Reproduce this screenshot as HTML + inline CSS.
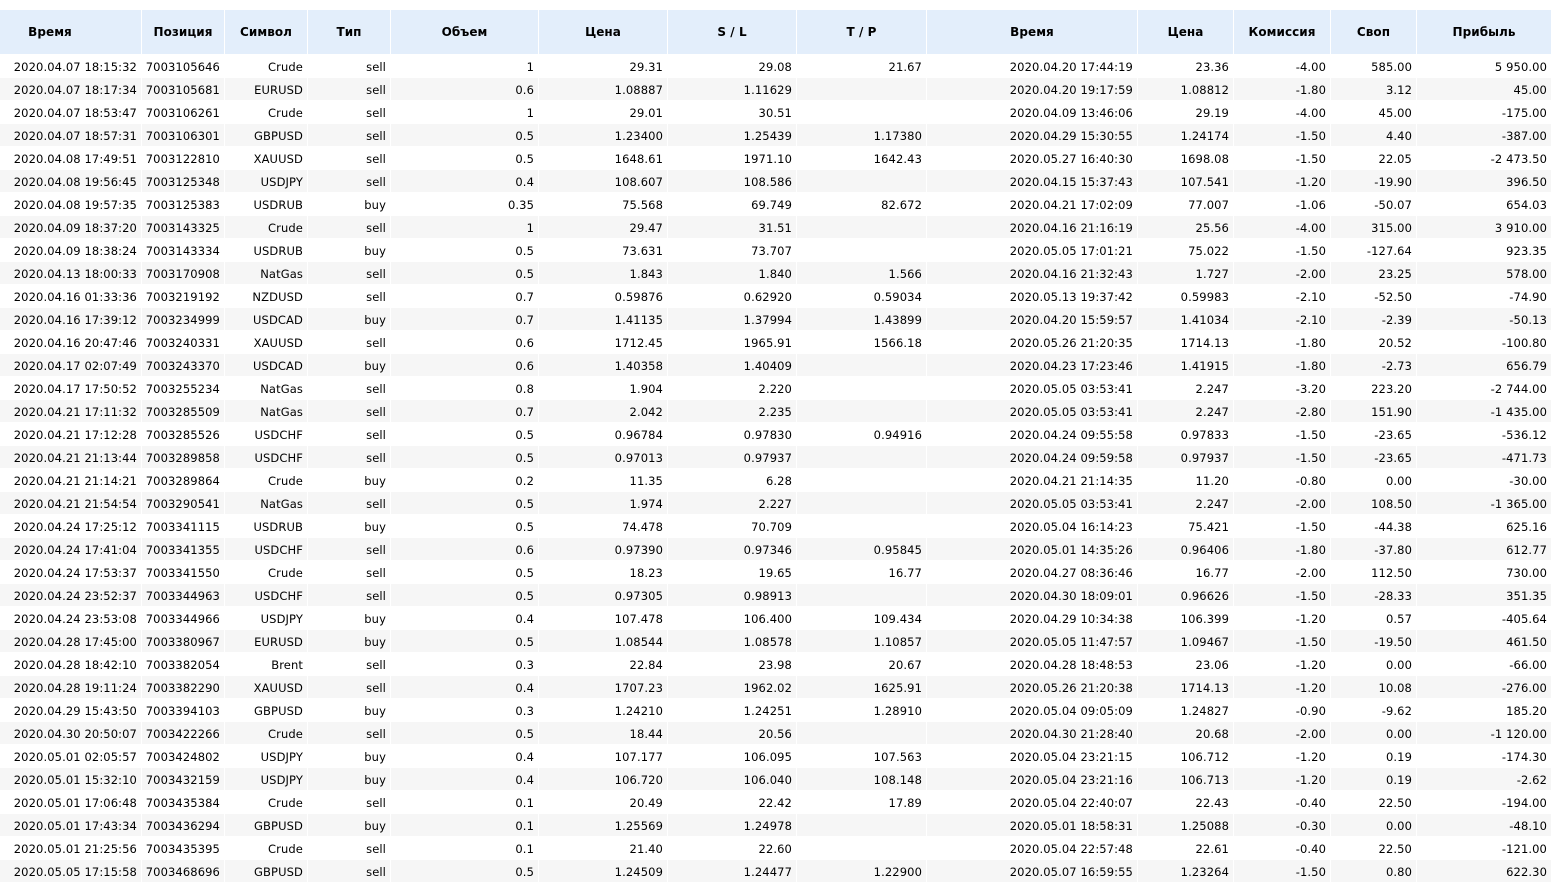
<!DOCTYPE html>
<html><head><meta charset="utf-8"><style>
html,body{margin:0;padding:0;background:#fff;width:1559px;height:882px;overflow:hidden}
table{position:absolute;left:-1px;top:9px;border-collapse:separate;border-spacing:1px;table-layout:fixed;width:1553px;font-family:"DejaVu Sans","Liberation Sans",sans-serif;font-size:11.5px;letter-spacing:.11px;color:#000}
th{height:44px;padding:0;background:#e3eefb;font-weight:bold;font-size:12px;letter-spacing:.05px;text-align:center;white-space:nowrap;color:#000}
td{box-sizing:border-box;height:22px;padding:2px 4px 0 0;text-align:right;white-space:nowrap;overflow:hidden}
tr:nth-child(odd) td{background:#f6f6f6}
th.f{padding-right:41px;width:100px}
</style></head><body>
<table>
<colgroup><col style="width:141px"><col style="width:82px"><col style="width:82px"><col style="width:82px"><col style="width:147px"><col style="width:128px"><col style="width:128px"><col style="width:129px"><col style="width:210px"><col style="width:95px"><col style="width:96px"><col style="width:85px"><col style="width:134px"></colgroup>
<tr><th class="f">Время</th><th>Позиция</th><th>Символ</th><th>Тип</th><th>Объем</th><th>Цена</th><th>S / L</th><th>T / P</th><th>Время</th><th>Цена</th><th>Комиссия</th><th>Своп</th><th>Прибыль</th></tr>
<tr><td>2020.04.07 18:15:32</td><td>7003105646</td><td>Crude</td><td>sell</td><td>1</td><td>29.31</td><td>29.08</td><td>21.67</td><td>2020.04.20 17:44:19</td><td>23.36</td><td>-4.00</td><td>585.00</td><td>5 950.00</td></tr>
<tr><td>2020.04.07 18:17:34</td><td>7003105681</td><td>EURUSD</td><td>sell</td><td>0.6</td><td>1.08887</td><td>1.11629</td><td></td><td>2020.04.20 19:17:59</td><td>1.08812</td><td>-1.80</td><td>3.12</td><td>45.00</td></tr>
<tr><td>2020.04.07 18:53:47</td><td>7003106261</td><td>Crude</td><td>sell</td><td>1</td><td>29.01</td><td>30.51</td><td></td><td>2020.04.09 13:46:06</td><td>29.19</td><td>-4.00</td><td>45.00</td><td>-175.00</td></tr>
<tr><td>2020.04.07 18:57:31</td><td>7003106301</td><td>GBPUSD</td><td>sell</td><td>0.5</td><td>1.23400</td><td>1.25439</td><td>1.17380</td><td>2020.04.29 15:30:55</td><td>1.24174</td><td>-1.50</td><td>4.40</td><td>-387.00</td></tr>
<tr><td>2020.04.08 17:49:51</td><td>7003122810</td><td>XAUUSD</td><td>sell</td><td>0.5</td><td>1648.61</td><td>1971.10</td><td>1642.43</td><td>2020.05.27 16:40:30</td><td>1698.08</td><td>-1.50</td><td>22.05</td><td>-2 473.50</td></tr>
<tr><td>2020.04.08 19:56:45</td><td>7003125348</td><td>USDJPY</td><td>sell</td><td>0.4</td><td>108.607</td><td>108.586</td><td></td><td>2020.04.15 15:37:43</td><td>107.541</td><td>-1.20</td><td>-19.90</td><td>396.50</td></tr>
<tr><td>2020.04.08 19:57:35</td><td>7003125383</td><td>USDRUB</td><td>buy</td><td>0.35</td><td>75.568</td><td>69.749</td><td>82.672</td><td>2020.04.21 17:02:09</td><td>77.007</td><td>-1.06</td><td>-50.07</td><td>654.03</td></tr>
<tr><td>2020.04.09 18:37:20</td><td>7003143325</td><td>Crude</td><td>sell</td><td>1</td><td>29.47</td><td>31.51</td><td></td><td>2020.04.16 21:16:19</td><td>25.56</td><td>-4.00</td><td>315.00</td><td>3 910.00</td></tr>
<tr><td>2020.04.09 18:38:24</td><td>7003143334</td><td>USDRUB</td><td>buy</td><td>0.5</td><td>73.631</td><td>73.707</td><td></td><td>2020.05.05 17:01:21</td><td>75.022</td><td>-1.50</td><td>-127.64</td><td>923.35</td></tr>
<tr><td>2020.04.13 18:00:33</td><td>7003170908</td><td>NatGas</td><td>sell</td><td>0.5</td><td>1.843</td><td>1.840</td><td>1.566</td><td>2020.04.16 21:32:43</td><td>1.727</td><td>-2.00</td><td>23.25</td><td>578.00</td></tr>
<tr><td>2020.04.16 01:33:36</td><td>7003219192</td><td>NZDUSD</td><td>sell</td><td>0.7</td><td>0.59876</td><td>0.62920</td><td>0.59034</td><td>2020.05.13 19:37:42</td><td>0.59983</td><td>-2.10</td><td>-52.50</td><td>-74.90</td></tr>
<tr><td>2020.04.16 17:39:12</td><td>7003234999</td><td>USDCAD</td><td>buy</td><td>0.7</td><td>1.41135</td><td>1.37994</td><td>1.43899</td><td>2020.04.20 15:59:57</td><td>1.41034</td><td>-2.10</td><td>-2.39</td><td>-50.13</td></tr>
<tr><td>2020.04.16 20:47:46</td><td>7003240331</td><td>XAUUSD</td><td>sell</td><td>0.6</td><td>1712.45</td><td>1965.91</td><td>1566.18</td><td>2020.05.26 21:20:35</td><td>1714.13</td><td>-1.80</td><td>20.52</td><td>-100.80</td></tr>
<tr><td>2020.04.17 02:07:49</td><td>7003243370</td><td>USDCAD</td><td>buy</td><td>0.6</td><td>1.40358</td><td>1.40409</td><td></td><td>2020.04.23 17:23:46</td><td>1.41915</td><td>-1.80</td><td>-2.73</td><td>656.79</td></tr>
<tr><td>2020.04.17 17:50:52</td><td>7003255234</td><td>NatGas</td><td>sell</td><td>0.8</td><td>1.904</td><td>2.220</td><td></td><td>2020.05.05 03:53:41</td><td>2.247</td><td>-3.20</td><td>223.20</td><td>-2 744.00</td></tr>
<tr><td>2020.04.21 17:11:32</td><td>7003285509</td><td>NatGas</td><td>sell</td><td>0.7</td><td>2.042</td><td>2.235</td><td></td><td>2020.05.05 03:53:41</td><td>2.247</td><td>-2.80</td><td>151.90</td><td>-1 435.00</td></tr>
<tr><td>2020.04.21 17:12:28</td><td>7003285526</td><td>USDCHF</td><td>sell</td><td>0.5</td><td>0.96784</td><td>0.97830</td><td>0.94916</td><td>2020.04.24 09:55:58</td><td>0.97833</td><td>-1.50</td><td>-23.65</td><td>-536.12</td></tr>
<tr><td>2020.04.21 21:13:44</td><td>7003289858</td><td>USDCHF</td><td>sell</td><td>0.5</td><td>0.97013</td><td>0.97937</td><td></td><td>2020.04.24 09:59:58</td><td>0.97937</td><td>-1.50</td><td>-23.65</td><td>-471.73</td></tr>
<tr><td>2020.04.21 21:14:21</td><td>7003289864</td><td>Crude</td><td>buy</td><td>0.2</td><td>11.35</td><td>6.28</td><td></td><td>2020.04.21 21:14:35</td><td>11.20</td><td>-0.80</td><td>0.00</td><td>-30.00</td></tr>
<tr><td>2020.04.21 21:54:54</td><td>7003290541</td><td>NatGas</td><td>sell</td><td>0.5</td><td>1.974</td><td>2.227</td><td></td><td>2020.05.05 03:53:41</td><td>2.247</td><td>-2.00</td><td>108.50</td><td>-1 365.00</td></tr>
<tr><td>2020.04.24 17:25:12</td><td>7003341115</td><td>USDRUB</td><td>buy</td><td>0.5</td><td>74.478</td><td>70.709</td><td></td><td>2020.05.04 16:14:23</td><td>75.421</td><td>-1.50</td><td>-44.38</td><td>625.16</td></tr>
<tr><td>2020.04.24 17:41:04</td><td>7003341355</td><td>USDCHF</td><td>sell</td><td>0.6</td><td>0.97390</td><td>0.97346</td><td>0.95845</td><td>2020.05.01 14:35:26</td><td>0.96406</td><td>-1.80</td><td>-37.80</td><td>612.77</td></tr>
<tr><td>2020.04.24 17:53:37</td><td>7003341550</td><td>Crude</td><td>sell</td><td>0.5</td><td>18.23</td><td>19.65</td><td>16.77</td><td>2020.04.27 08:36:46</td><td>16.77</td><td>-2.00</td><td>112.50</td><td>730.00</td></tr>
<tr><td>2020.04.24 23:52:37</td><td>7003344963</td><td>USDCHF</td><td>sell</td><td>0.5</td><td>0.97305</td><td>0.98913</td><td></td><td>2020.04.30 18:09:01</td><td>0.96626</td><td>-1.50</td><td>-28.33</td><td>351.35</td></tr>
<tr><td>2020.04.24 23:53:08</td><td>7003344966</td><td>USDJPY</td><td>buy</td><td>0.4</td><td>107.478</td><td>106.400</td><td>109.434</td><td>2020.04.29 10:34:38</td><td>106.399</td><td>-1.20</td><td>0.57</td><td>-405.64</td></tr>
<tr><td>2020.04.28 17:45:00</td><td>7003380967</td><td>EURUSD</td><td>buy</td><td>0.5</td><td>1.08544</td><td>1.08578</td><td>1.10857</td><td>2020.05.05 11:47:57</td><td>1.09467</td><td>-1.50</td><td>-19.50</td><td>461.50</td></tr>
<tr><td>2020.04.28 18:42:10</td><td>7003382054</td><td>Brent</td><td>sell</td><td>0.3</td><td>22.84</td><td>23.98</td><td>20.67</td><td>2020.04.28 18:48:53</td><td>23.06</td><td>-1.20</td><td>0.00</td><td>-66.00</td></tr>
<tr><td>2020.04.28 19:11:24</td><td>7003382290</td><td>XAUUSD</td><td>sell</td><td>0.4</td><td>1707.23</td><td>1962.02</td><td>1625.91</td><td>2020.05.26 21:20:38</td><td>1714.13</td><td>-1.20</td><td>10.08</td><td>-276.00</td></tr>
<tr><td>2020.04.29 15:43:50</td><td>7003394103</td><td>GBPUSD</td><td>buy</td><td>0.3</td><td>1.24210</td><td>1.24251</td><td>1.28910</td><td>2020.05.04 09:05:09</td><td>1.24827</td><td>-0.90</td><td>-9.62</td><td>185.20</td></tr>
<tr><td>2020.04.30 20:50:07</td><td>7003422266</td><td>Crude</td><td>sell</td><td>0.5</td><td>18.44</td><td>20.56</td><td></td><td>2020.04.30 21:28:40</td><td>20.68</td><td>-2.00</td><td>0.00</td><td>-1 120.00</td></tr>
<tr><td>2020.05.01 02:05:57</td><td>7003424802</td><td>USDJPY</td><td>buy</td><td>0.4</td><td>107.177</td><td>106.095</td><td>107.563</td><td>2020.05.04 23:21:15</td><td>106.712</td><td>-1.20</td><td>0.19</td><td>-174.30</td></tr>
<tr><td>2020.05.01 15:32:10</td><td>7003432159</td><td>USDJPY</td><td>buy</td><td>0.4</td><td>106.720</td><td>106.040</td><td>108.148</td><td>2020.05.04 23:21:16</td><td>106.713</td><td>-1.20</td><td>0.19</td><td>-2.62</td></tr>
<tr><td>2020.05.01 17:06:48</td><td>7003435384</td><td>Crude</td><td>sell</td><td>0.1</td><td>20.49</td><td>22.42</td><td>17.89</td><td>2020.05.04 22:40:07</td><td>22.43</td><td>-0.40</td><td>22.50</td><td>-194.00</td></tr>
<tr><td>2020.05.01 17:43:34</td><td>7003436294</td><td>GBPUSD</td><td>buy</td><td>0.1</td><td>1.25569</td><td>1.24978</td><td></td><td>2020.05.01 18:58:31</td><td>1.25088</td><td>-0.30</td><td>0.00</td><td>-48.10</td></tr>
<tr><td>2020.05.01 21:25:56</td><td>7003435395</td><td>Crude</td><td>sell</td><td>0.1</td><td>21.40</td><td>22.60</td><td></td><td>2020.05.04 22:57:48</td><td>22.61</td><td>-0.40</td><td>22.50</td><td>-121.00</td></tr>
<tr><td>2020.05.05 17:15:58</td><td>7003468696</td><td>GBPUSD</td><td>sell</td><td>0.5</td><td>1.24509</td><td>1.24477</td><td>1.22900</td><td>2020.05.07 16:59:55</td><td>1.23264</td><td>-1.50</td><td>0.80</td><td>622.30</td></tr>
</table>
</body></html>
